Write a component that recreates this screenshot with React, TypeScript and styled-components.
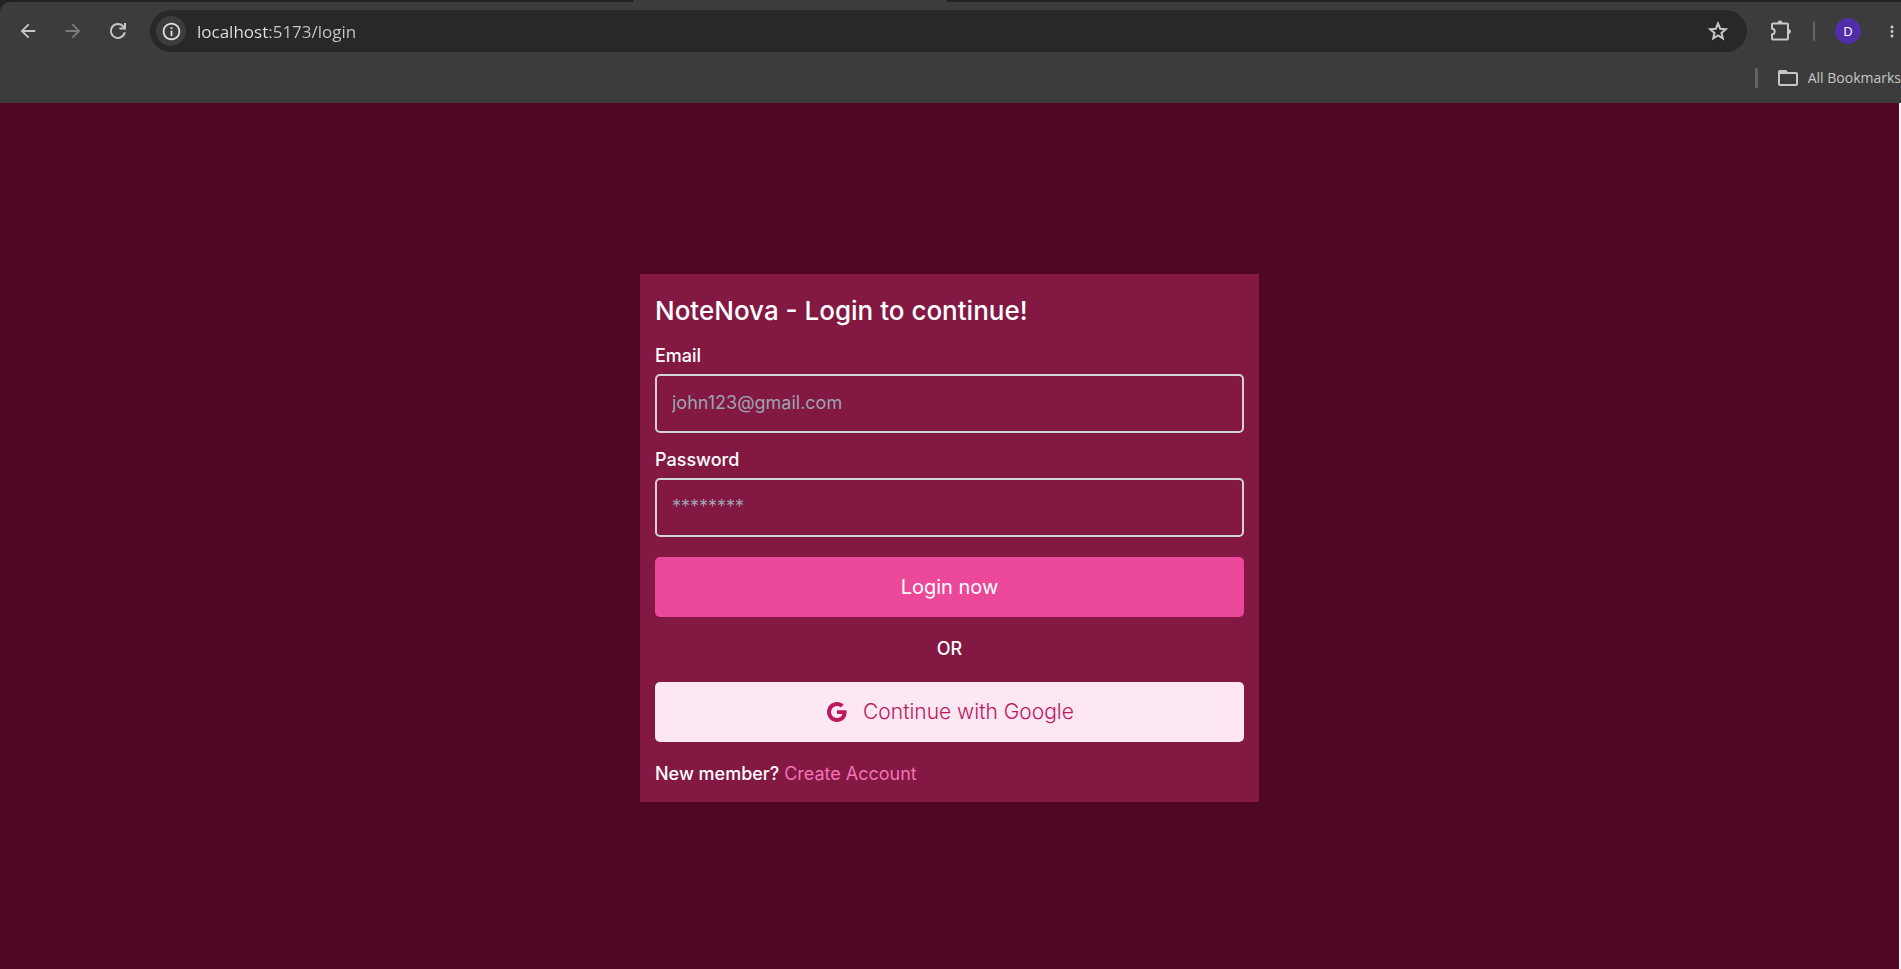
import React from "react";
import styled, { createGlobalStyle } from "styled-components";
import { MdArrowBack, MdArrowForward, MdInfoOutline, MdMoreVert, MdFolderOpen } from "react-icons/md";
import { RiGoogleFill } from "react-icons/ri";

const GlobalStyle = createGlobalStyle`
  *, *::before, *::after { box-sizing: border-box; }
  body { margin: 0; background: #500724; }
  button, input { font: inherit; }
`;

const Window = styled.div`
  min-height: 100vh;
  display: flex;
  flex-direction: column;
  font-family: Inter, "Liberation Sans", sans-serif;
`;

const Chrome = styled.header`
  background: #202121;
  font-family: "Open Sans", "Noto Sans", sans-serif;
`;

const TabStrip = styled.div`
  height: 2px;
  display: flex;
  justify-content: center;
`;

const ActiveTab = styled.div`
  width: 314px;
  margin-right: 322px;
  background: #3c3c3c;
`;

const ToolbarArea = styled.div`
  background: #3c3c3c;
  border-top-left-radius: 10px;
`;

const Toolbar = styled.div`
  height: 58px;
  padding: 0 0 0 12px;
  display: flex;
  align-items: center;
`;

const IconButton = styled.button<{ $dim?: boolean; $gap?: number; $width?: number }>`
  flex: none;
  width: ${(p) => p.$width ?? 32}px;
  height: 32px;
  margin: 0 ${(p) => p.$gap ?? 0}px 0 0;
  padding: 0;
  display: flex;
  align-items: center;
  justify-content: center;
  border: 0;
  background: none;
  color: ${(p) => (p.$dim ? "#7d7d7d" : "#c7c7c7")};
`;

const AddressBar = styled.div`
  flex: 1;
  min-width: 0;
  height: 42px;
  margin-right: 2px;
  padding: 0 13px 0 6px;
  display: flex;
  align-items: center;
  border-radius: 21px;
  background: #282828;
`;

const SiteInfo = styled.button`
  flex: none;
  width: 30px;
  height: 30px;
  padding: 0;
  display: flex;
  align-items: center;
  justify-content: center;
  border: 0;
  border-radius: 50%;
  background: #3c3c3c;
  color: #e3e3e3;
`;

const Address = styled.input`
  flex: 1;
  min-width: 0;
  height: 30px;
  margin-left: 10px;
  padding: 0 0 0 1px;
  border: 0;
  outline: 0;
  font-size: 17px;
  color: transparent;
  background: linear-gradient(90deg, #e3e3e3 74px, #c7c7c7 74px);
  background-clip: text;
`;

const Divider = styled.span<{ $wide?: boolean }>`
  flex: none;
  width: ${(p) => (p.$wide ? 3 : 2)}px;
  height: 20px;
  border-radius: 1px;
  background: #646464;
`;

const Avatar = styled.button`
  flex: none;
  width: 26px;
  height: 26px;
  margin: 0 22px 0 20px;
  padding: 0;
  border: 0;
  border-radius: 50%;
  background: #512da8;
  color: #fff;
  font-size: 13px;
  line-height: 26px;
`;

const Bookmarks = styled.div`
  height: 43px;
  padding-bottom: 8px;
  display: flex;
  align-items: center;
  justify-content: flex-end;
`;

const AllBookmarks = styled.button`
  height: 28px;
  padding: 0 0 0 18px;
  display: flex;
  align-items: center;
  gap: 8px;
  border: 0;
  background: none;
  color: #c7c7c7;
  font-size: 14px;
  white-space: nowrap;
`;

const Page = styled.main`
  flex: 1;
  padding: 24px 16px 20px;
  display: flex;
  align-items: center;
  justify-content: center;
  background: #500724;
  border-right: 2px solid #f1f3f4;
`;

const Card = styled.form`
  width: 100%;
  max-width: 619px;
  padding: 15px;
  display: flex;
  flex-direction: column;
  background: #831843;
  color: #fff;
  font-size: 18px;
  line-height: 24px;
`;

const Title = styled.h1`
  margin: 0 0 11px;
  font-size: 26px;
  font-weight: 500;
  line-height: 44px;
`;

const Field = styled.div<{ $gap: number }>`
  margin-bottom: ${(p) => p.$gap}px;
  display: flex;
  flex-direction: column;
  gap: 6px;
`;

const Label = styled.label`
  font-weight: 500;
`;

const TextInput = styled.input`
  height: 59px;
  padding: 0 15px 2px;
  border: 2px solid #d1d5db;
  border-radius: 5px;
  outline: 0;
  background: transparent;
  color: #fff;

  &::placeholder {
    color: #9ca3af;
    opacity: 1;
  }
`;

const ActionButton = styled.button<{ $light?: boolean }>`
  height: 60px;
  display: flex;
  align-items: center;
  justify-content: center;
  gap: 14px;
  border: 0;
  border-radius: 5px;
  background: ${(p) => (p.$light ? "#fce7f3" : "#ec4899")};
  color: ${(p) => (p.$light ? "#be185d" : "#fff")};
  font-size: ${(p) => (p.$light ? 21 : 20)}px;
  font-weight: ${(p) => (p.$light ? 300 : 400)};
`;

const Or = styled.p`
  margin: 20px 0 21px;
  text-align: center;
  font-weight: 500;
`;

const Signup = styled.p`
  margin: 20px 0 1px;
  font-weight: 500;
`;

const SignupLink = styled.a`
  color: #f472b6;
  font-weight: 400;
  text-decoration: none;
`;

const ReloadIcon = () => (
  <svg width="18" height="18" viewBox="0 0 18 18" fill="none" stroke="currentColor" strokeWidth="2">
    <path d="M15.8 10.2A7 7 0 1 1 14.4 4.6L16 6.2" />
    <path d="M16 1v5.6h-5.6" />
  </svg>
);

const StarIcon = () => (
  <svg width="22" height="22" viewBox="0 0 22 22" fill="none" stroke="currentColor" strokeWidth="2">
    <path d="M11 3.500l2.200 5.200 5.600.5-4.300 3.700 1.300 5.500-4.800-2.900-4.800 2.900 1.300-5.500-4.300-3.700 5.600-.5z" />
  </svg>
);

const ExtensionIcon = () => (
  <svg width="22" height="22" viewBox="0 0 22 22">
    <path
      d="M3 3.500h14a1 1 0 0 1 1 1v14a1 1 0 0 1-1 1H3a1 1 0 0 1-1-1v-4c3.600-.5 3.600-5.500 0-6v-4a1 1 0 0 1 1-1z"
      fill="none"
      stroke="currentColor"
      strokeWidth="2"
    />
    <path d="M7.500 3a2.500 2.500 0 0 1 5 0zM18.500 9a2.500 2.500 0 0 1 0 5z" fill="currentColor" />
  </svg>
);

export default function App() {
  return (
    <Window>
      <GlobalStyle />
      <Chrome>
        <TabStrip>
          <ActiveTab />
        </TabStrip>
        <ToolbarArea>
          <Toolbar>
            <IconButton type="button" aria-label="Back" $gap={13}><MdArrowBack size={22} /></IconButton>
            <IconButton type="button" aria-label="Forward" $gap={13} $dim><MdArrowForward size={22} /></IconButton>
            <IconButton type="button" aria-label="Reload" $gap={16}><ReloadIcon /></IconButton>
            <AddressBar>
              <SiteInfo type="button" aria-label="View site information"><MdInfoOutline size={21} /></SiteInfo>
              <Address aria-label="Address" defaultValue="localhost:5173/login" />
              <IconButton type="button" aria-label="Bookmark this page"><StarIcon /></IconButton>
            </AddressBar>
            <IconButton type="button" aria-label="Extensions" $width={64}><ExtensionIcon /></IconButton>
            <Divider />
            <Avatar type="button" aria-label="Profile">D</Avatar>
            <IconButton type="button" aria-label="More" $width={18}><MdMoreVert size={27} /></IconButton>
          </Toolbar>
          <Bookmarks>
            <Divider $wide />
            <AllBookmarks type="button">
              <MdFolderOpen size={24} />
              All Bookmarks
            </AllBookmarks>
          </Bookmarks>
        </ToolbarArea>
      </Chrome>
      <Page>
        <Card onSubmit={(e: React.FormEvent) => e.preventDefault()}>
          <Title>NoteNova - Login to continue!</Title>
          <Field $gap={15}>
            <Label htmlFor="email">Email</Label>
            <TextInput id="email" type="email" placeholder="john123@gmail.com" />
          </Field>
          <Field $gap={20}>
            <Label htmlFor="password">Password</Label>
            <TextInput id="password" type="password" placeholder="********" />
          </Field>
          <ActionButton type="submit">Login now</ActionButton>
          <Or>OR</Or>
          <ActionButton type="button" $light>
            <RiGoogleFill size={24} />
            Continue with Google
          </ActionButton>
          <Signup>
            New member? <SignupLink href="/signup">Create Account</SignupLink>
          </Signup>
        </Card>
      </Page>
    </Window>
  );
}
